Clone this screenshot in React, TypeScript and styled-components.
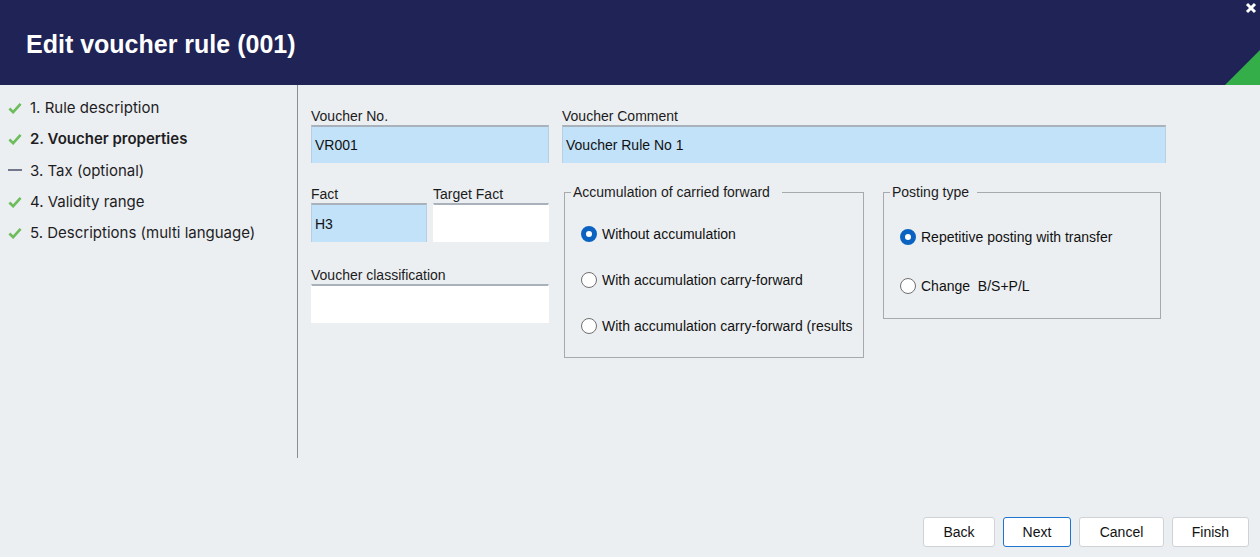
import React from "react";
import styled, { createGlobalStyle } from "styled-components";

const GlobalStyle = createGlobalStyle`
  html, body {
    margin: 0;
    padding: 0;
    background: #eceff2;
    font-family: "Liberation Sans", Arial, sans-serif;
  }
`;

const Window = styled.div`
  width: 1260px;
  height: 557px;
  display: flex;
  flex-direction: column;
  background: #eceff2;
  overflow: hidden;
`;

const Header = styled.header`
  position: relative;
  height: 85px;
  flex: none;
  background: #1f2355;
  display: flex;
  align-items: center;
  padding-left: 26px;
  box-sizing: border-box;
`;

const Title = styled.h1`
  margin: 0;
  margin-top: 3px;
  color: #ffffff;
  font-family: "Liberation Sans", Arial, sans-serif;
  font-weight: bold;
  font-size: 25px;
`;

const Corner = styled.div`
  position: absolute;
  right: 0;
  bottom: 0;
  width: 35px;
  height: 35px;
  background: #33ae49;
  clip-path: polygon(100% 0, 100% 100%, 0 100%);
`;

const CloseButton = styled.button`
  position: absolute;
  top: 2px;
  right: 3px;
  width: 12px;
  height: 12px;
  padding: 0;
  border: none;
  background: transparent;
  display: flex;
`;

const Body = styled.div`
  display: flex;
  height: 373px;
  flex: none;
`;

const Sidebar = styled.nav`
  width: 298px;
  flex: none;
  border-right: 1px solid #8a8d94;
  padding-top: 7px;
  box-sizing: border-box;
`;

const Step = styled.div<{ $current?: boolean }>`
  display: flex;
  align-items: center;
  height: 31.3px;
  padding-left: 8px;
  gap: 8px;
  font-family: Inter, "Noto Sans", sans-serif;
  font-size: 15px;
  color: #1d1d1f;
  font-weight: ${(p) => (p.$current ? 600 : 400)};
`;

const StepMark = styled.span`
  width: 14px;
  display: flex;
  justify-content: center;
`;

const Form = styled.section`
  flex: 1;
  padding: 23px 0 0 13px;
  display: flex;
  flex-direction: column;
  gap: 23px;
`;

const Row = styled.div`
  display: flex;
  align-items: flex-start;
`;

const Field = styled.div<{ $width: number }>`
  width: ${(p) => p.$width}px;
  display: flex;
  flex-direction: column;
`;

const Label = styled.label`
  font-size: 14px;
  line-height: 16px;
  color: #1b1b1b;
  margin-bottom: 1px;
`;

const Input = styled.div<{ $filled?: boolean; $tall?: boolean }>`
  height: ${(p) => (p.$tall ? 39 : 38)}px;
  box-sizing: border-box;
  border-top: 2px solid #a9b2ba;
  border-left: 1px solid ${(p) => (p.$filled ? "#b7cfe0" : "#ffffff")};
  border-right: 1px solid ${(p) => (p.$filled ? "#b7cfe0" : "#ffffff")};
  background: ${(p) => (p.$filled ? "#c1e2f8" : "#ffffff")};
  padding-left: 3px;
  display: flex;
  align-items: center;
  font-size: 14px;
  color: #111;
`;

const LeftColumn = styled.div`
  width: 238px;
  display: flex;
  flex-direction: column;
  gap: 25px;
`;

const Pair = styled.div`
  display: flex;
  gap: 6px;
`;

const Group = styled.fieldset<{ $width: number; $height: number; $gap: number; $top: number }>`
  margin: -2px 0 0 0;
  width: ${(p) => p.$width}px;
  height: ${(p) => p.$height}px;
  box-sizing: border-box;
  border: 1px solid #a7a9ac;
  padding: ${(p) => p.$top}px 0 0 0;
  display: flex;
  flex-direction: column;
  gap: ${(p) => p.$gap}px;
`;

const Legend = styled.legend<{ $tail: number }>`
  margin-left: 6px;
  padding: 0 ${(p) => p.$tail}px 0 2px;
  font-size: 14px;
  line-height: 16px;
  color: #1b1b1b;
`;

const Option = styled.label`
  display: flex;
  align-items: center;
  gap: 5px;
  margin-left: 16px;
  font-size: 14px;
  color: #111;
  white-space: nowrap;
  height: 18px;
`;

const Radio = styled.span<{ $checked?: boolean }>`
  width: 16px;
  height: 16px;
  box-sizing: border-box;
  border-radius: 50%;
  flex: none;
  background: #ffffff;
  border: ${(p) => (p.$checked ? "5px solid #0b63c1" : "1px solid #6f6f6f")};
`;

const Footer = styled.footer`
  flex: 1;
  display: flex;
  justify-content: flex-end;
  align-items: flex-end;
  gap: 8px;
  padding: 0 11px 10px 0;
`;

const Button = styled.button<{ $primary?: boolean; $width: number }>`
  width: ${(p) => p.$width}px;
  height: 30px;
  background: #ffffff;
  border: 1px solid ${(p) => (p.$primary ? "#1e74cf" : "#cfd2d6")};
  border-radius: 3px;
  font-family: "Liberation Sans", Arial, sans-serif;
  font-size: 14px;
  color: #111;
  padding: 0;
`;

const Check = () => (
  <svg width="15" height="12" viewBox="0 0 15 12">
    <path d="M1.5 6.5 L5.5 10.5 L13.5 1.5" fill="none" stroke="#6dbd5c" strokeWidth="2.8" />
  </svg>
);

const Dash = () => (
  <svg width="15" height="4" viewBox="0 0 15 4">
    <rect x="0" y="1" width="15" height="2" fill="#6a6f86" />
  </svg>
);

const steps = [
  { label: "1. Rule description", done: true },
  { label: "2. Voucher properties", done: true, current: true },
  { label: "3. Tax (optional)", done: false },
  { label: "4. Validity range", done: true },
  { label: "5. Descriptions (multi language)", done: true },
];

export default function App() {
  return (
    <Window>
      <GlobalStyle />
      <Header>
        <Title>Edit voucher rule (001)</Title>
        <CloseButton aria-label="Close">
          <svg width="12" height="12" viewBox="0 0 12 12">
            <path d="M2 2 L10 10 M10 2 L2 10" stroke="#ffffff" strokeWidth="3" />
          </svg>
        </CloseButton>
        <Corner />
      </Header>
      <Body>
        <Sidebar>
          {steps.map((s) => (
            <Step key={s.label} $current={s.current}>
              <StepMark>{s.done ? <Check /> : <Dash />}</StepMark>
              {s.label}
            </Step>
          ))}
        </Sidebar>
        <Form>
          <Row>
            <Field $width={238}>
              <Label>Voucher No.</Label>
              <Input $filled>VR001</Input>
            </Field>
            <Field $width={604} style={{ marginLeft: 13 }}>
              <Label>Voucher Comment</Label>
              <Input $filled>Voucher Rule No 1</Input>
            </Field>
          </Row>
          <Row>
            <LeftColumn>
              <Pair>
                <Field $width={116}>
                  <Label>Fact</Label>
                  <Input $filled $tall>H3</Input>
                </Field>
                <Field $width={116}>
                  <Label>Target Fact</Label>
                  <Input $tall />
                </Field>
              </Pair>
              <Field $width={238}>
                <Label>Voucher classification</Label>
                <Input $tall />
              </Field>
            </LeftColumn>
            <Group $width={300} $height={174} $gap={28} $top={25} style={{ marginLeft: 15 }}>
              <Legend $tail={12}>Accumulation of carried forward</Legend>
              <Option>
                <Radio $checked />
                Without accumulation
              </Option>
              <Option>
                <Radio />
                With accumulation carry-forward
              </Option>
              <Option>
                <Radio />
                With accumulation carry-forward (results
              </Option>
            </Group>
            <Group $width={278} $height={135} $gap={31} $top={28} style={{ marginLeft: 19 }}>
              <Legend $tail={8}>Posting type</Legend>
              <Option>
                <Radio $checked />
                Repetitive posting with transfer
              </Option>
              <Option>
                <Radio />
                Change&nbsp; B/S+P/L
              </Option>
            </Group>
          </Row>
        </Form>
      </Body>
      <Footer>
        <Button $width={72}>Back</Button>
        <Button $width={68} $primary>Next</Button>
        <Button $width={85}>Cancel</Button>
        <Button $width={77}>Finish</Button>
      </Footer>
    </Window>
  );
}
